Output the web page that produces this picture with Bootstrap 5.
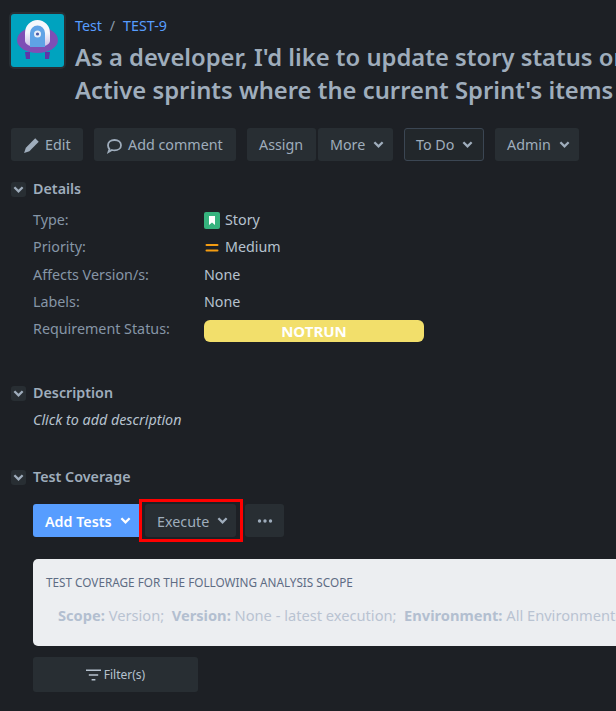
<!DOCTYPE html>
<html lang="en">
<head>
<meta charset="utf-8">
<title>TEST-9</title>
<link href="https://cdn.jsdelivr.net/npm/bootstrap@5.3.0/dist/css/bootstrap.min.css" rel="stylesheet">
<style>
html,body{height:711px;overflow:hidden}
body{background:#1d2025;color:#b6c2cf;font-family:"Noto Sans","Open Sans",sans-serif;font-size:14.3px;width:616px}
.pg{padding:14px 0 0 11px;width:900px}
.logo-frame{width:57px;height:57px;margin:-2px 0 0 -2px;padding:2px;border-radius:5px;background:#282e33;flex:none}
.logo-frame svg{display:block;width:53px;height:53px}
.head-txt{margin-left:9px}
.crumb{font-size:14.3px;line-height:24px;height:24px}
.crumb a{color:#579dff;text-decoration:none}
.crumb i{font-style:normal;color:#8c9bab;margin:0 8px 0 4px}
.ttl{font-size:23.8px;font-weight:600;line-height:33px;color:#9fadbc;margin:0;white-space:nowrap}
.ttl1{margin-top:3px}
.bar{margin-top:21px;height:33px}
.jb{background:#282e33;border:0;color:#9fadbc;font-size:14.3px;height:33px;padding:2px 0 0 12px;border-radius:3px;display:inline-flex;align-items:center;justify-content:flex-start;gap:3px;line-height:1;white-space:nowrap}
.jb:hover,.jb:active{background:#282e33;color:#9fadbc}
.w72{width:72px}.w142{width:142px}.w69{width:69px}.w75{width:75px}
.w80{width:80px}.w84{width:84px}
.jb.out{border:1px solid #3b4653;background:#22272b;padding-left:11px}
.mod-h{font-size:14.3px;font-weight:600;color:#9fadbc;height:16px;line-height:16px}
.tog{width:15px;height:15px;background:#282e33;border-radius:3px;display:flex;align-items:center;justify-content:center;margin-right:7px;flex:none}
.sec1{margin-top:20px}.sec2{margin-top:41px}.sec3{margin-top:37px}
.dl{margin:11px 0 0 22px}
.dr{height:27.3px;line-height:24px;display:flex;align-items:flex-start}
.dt-l{width:171px;color:#8696a7;flex:none}
.dt-v{color:#b6c2cf;display:flex;align-items:center;gap:5px}
.story{width:16px;height:17px}
.pill{width:220px;height:22px;margin-top:3px;margin-bottom:-1px;background:#f2df6b;border-radius:6px;color:#fff;font-weight:700;font-size:15px;text-align:center;line-height:22px}
.cl{margin:7px 0 0 22px;font-style:italic;color:#b6c2cf;line-height:24px}
.actions{margin:19px 0 0 22px;height:33px}
.blue{background:#579dff;color:#fff;font-weight:600;width:106px;border-radius:3px 0 0 3px}
.blue:hover,.blue:active{background:#579dff;color:#fff}
.redbox{border:3px solid #f00;width:104px;height:43px;margin:-5px 2px 0 0;display:flex;align-items:center;padding-left:3px;flex:none}
.w91{width:91px}
.jb.w39{width:39px;justify-content:center;padding:0}
.panel{margin:22px 0 0 22px;width:800px;height:87px;background:#eceef1;border-radius:5px;padding:15px 13px}
.panel h6{font-size:11.75px;font-weight:400;color:#5e6c84;margin:0;line-height:16px}
.scope{margin:15px 0 0 12px;color:#b9c3d2;font-size:14.65px;line-height:20px;white-space:nowrap}
.scope b{font-weight:700;color:#b3bfd0}
.jb.filt{margin:11px 0 0 22px;width:165px;height:35px;font-size:12px;justify-content:center;color:#b6c2cf;padding:0}
.chev{margin-left:5px;margin-top:-3px}
.ico{margin-right:2px;flex:none}
</style>
</head>
<body>
<div class="pg">
  <div class="d-flex">
    <div class="logo-frame">
      <svg viewBox="0 0 53 53"><defs><linearGradient id="dome" x1="0" y1="0" x2="0" y2="1"><stop offset=".45" stop-color="#f4f7fc"/><stop offset="1" stop-color="#c9bde6"/></linearGradient></defs><rect width="53" height="53" rx="3" fill="#00a3bf"/><ellipse cx="26.500" cy="26" rx="20.500" ry="13" fill="#7e4fb5"/><path d="M14 38h5v7h-4zM34 38h5l-1 7h-4z" fill="#5e35a8"/><path d="M14 19a12.500 13 0 0 1 25 0v8c0 3-5 6-12.500 6S14 30 14 27z" fill="url(#dome)"/><path d="M19 33V19a7.500 7.500 0 0 1 15 0v14z" fill="#5fa3e6"/><circle cx="26.500" cy="20" r="3.500" fill="#e8eef8"/><circle cx="26.500" cy="20" r="1.600" fill="#4b5aa8"/></svg>
    </div>
    <div class="head-txt">
      <div class="crumb"><a href="#">Test</a><i> /</i><a href="#">TEST-9</a></div>
      <h1 class="ttl ttl1">As a developer, I'd like to update story status on the</h1>
      <h1 class="ttl">Active sprints where the current Sprint's items are displayed</h1>
    </div>
  </div>

  <div class="d-flex bar">
    <button class="btn jb w72 me-2 ms-0"><svg class="ico" width="17" height="17" viewBox="0 0 16 16"><path d="M11.500 1.200l3.300 3.300L6 13.300l-5 1.700 1.700-5z" fill="#9fadbc"/></svg>Edit</button>
    <button class="btn jb w142" style="margin-left:3px"><svg class="ico" width="17" height="16" viewBox="0 0 17 16"><path d="M8.500 2c3.800 0 6.500 2.300 6.500 5.200s-2.700 5.200-6.500 5.200c-1 0-1.800-.1-2.600-.4L2.500 14l1-2.900C2.500 10 2 8.700 2 7.200 2 4.300 4.700 2 8.500 2z" fill="none" stroke="#9fadbc" stroke-width="1.800"/></svg>Add comment</button>
    <button class="btn jb w69" style="margin-left:11px">Assign</button>
    <button class="btn jb w75" style="margin-left:2px">More <svg class="chev" width="11" height="11" viewBox="0 0 12 12"><path d="M1.500 3.500L6 8l4.500-4.500" fill="none" stroke="#9fadbc" stroke-width="2.500"/></svg></button>
    <button class="btn jb out w80" style="margin-left:11px">To Do <svg class="chev" width="11" height="11" viewBox="0 0 12 12"><path d="M1.500 3.500L6 8l4.500-4.500" fill="none" stroke="#9fadbc" stroke-width="2.500"/></svg></button>
    <button class="btn jb w84" style="margin-left:11px">Admin <svg class="chev" width="11" height="11" viewBox="0 0 12 12"><path d="M1.500 3.500L6 8l4.500-4.500" fill="none" stroke="#9fadbc" stroke-width="2.500"/></svg></button>
  </div>

  <div class="d-flex align-items-center mod-h sec1"><span class="tog"><svg width="11" height="11" viewBox="0 0 12 12"><path d="M1.500 3.500L6 8l4.500-4.500" fill="none" stroke="#9fadbc" stroke-width="2.500"/></svg></span>Details</div>
  <div class="dl">
    <div class="dr"><div class="dt-l">Type:</div><div class="dt-v"><svg class="story" viewBox="0 0 16 17"><rect width="16" height="17" rx="2" fill="#36b37e"/><path d="M5 4h6v9l-3-2.500L5 13z" fill="#fff"/></svg>Story</div></div>
    <div class="dr"><div class="dt-l">Priority:</div><div class="dt-v"><svg class="story" viewBox="0 0 16 17"><path d="M2.500 6h11M2.500 11.500h11" stroke="#f39c12" stroke-width="2" stroke-linecap="round"/></svg>Medium</div></div>
    <div class="dr"><div class="dt-l">Affects Version/s:</div><div class="dt-v">None</div></div>
    <div class="dr"><div class="dt-l">Labels:</div><div class="dt-v">None</div></div>
    <div class="dr"><div class="dt-l">Requirement Status:</div><div class="pill">NOTRUN</div></div>
  </div>

  <div class="d-flex align-items-center mod-h sec2"><span class="tog"><svg width="11" height="11" viewBox="0 0 12 12"><path d="M1.500 3.500L6 8l4.500-4.500" fill="none" stroke="#9fadbc" stroke-width="2.500"/></svg></span>Description</div>
  <div class="cl">Click to add description</div>

  <div class="d-flex align-items-center mod-h sec3"><span class="tog"><svg width="11" height="11" viewBox="0 0 12 12"><path d="M1.500 3.500L6 8l4.500-4.500" fill="none" stroke="#9fadbc" stroke-width="2.500"/></svg></span>Test Coverage</div>
  <div class="d-flex actions">
    <button class="btn jb blue">Add Tests <svg class="chev" width="11" height="11" viewBox="0 0 12 12"><path d="M1.500 3.500L6 8l4.500-4.500" fill="none" stroke="#fff" stroke-width="2.500"/></svg></button>
    <div class="redbox"><button class="btn jb w91">Execute <svg class="chev" width="11" height="11" viewBox="0 0 12 12"><path d="M1.500 3.500L6 8l4.500-4.500" fill="none" stroke="#9fadbc" stroke-width="2.500"/></svg></button></div>
    <button class="btn jb w39"><svg width="16" height="4" viewBox="0 0 16 4"><circle cx="2.500" cy="2" r="1.700" fill="#9fadbc"/><circle cx="8" cy="2" r="1.700" fill="#9fadbc"/><circle cx="13.500" cy="2" r="1.700" fill="#9fadbc"/></svg></button>
  </div>
  <div class="panel">
    <h6>TEST COVERAGE FOR THE FOLLOWING ANALYSIS SCOPE</h6>
    <div class="scope"><b>Scope:</b> Version;&nbsp; <b>Version:</b> None - latest execution;&nbsp; <b>Environment:</b> All Environments</div>
  </div>
  <button class="btn jb filt"><svg width="15" height="12" viewBox="0 0 16 12"><path d="M0 1h16M3 6h10M6 11h4" stroke="#b6c2cf" stroke-width="1.600"/></svg>Filter(s)</button>
</div>
</body>
</html>
